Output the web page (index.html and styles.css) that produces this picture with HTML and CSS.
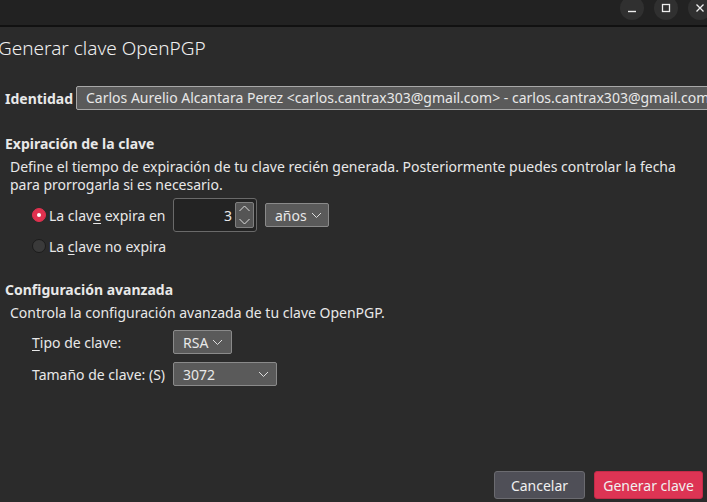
FILE: index.html
```html
<!DOCTYPE html>
<html lang="es">
<head>
<meta charset="utf-8">
<title>Generar clave OpenPGP</title>
<link rel="stylesheet" href="styles.css">
</head>
<body>
<div class="titlebar">
  <div class="wbtn"><svg width="16" height="16" viewBox="0 0 16 16"><path d="M4 11.5h8" stroke="#eee" stroke-width="1.4"/></svg></div>
  <div class="wbtn"><svg width="16" height="16" viewBox="0 0 16 16"><rect x="4.5" y="4.5" width="7" height="7" fill="none" stroke="#eee" stroke-width="1.3"/></svg></div>
  <div class="wbtn"><svg width="16" height="16" viewBox="0 0 16 16"><path d="M4.5 4.5l7 7M11.5 4.5l-7 7" stroke="#eee" stroke-width="1.3"/></svg></div>
</div>
<div class="dialog">
  <h1 class="title">Generar clave OpenPGP</h1>
  <div class="identity">
    <span class="bold id-label">Identidad</span>
    <div class="idfield">Carlos Aurelio Alcantara Perez &lt;carlos.cantrax303@gmail.com&gt; - carlos.cantrax303@gmail.com</div>
  </div>
  <h2 class="section">Expiración de la clave</h2>
  <p class="desc desc1">Define el tiempo de expiración de tu clave recién generada. Posteriormente puedes controlar la fecha para prorrogarla si es necesario.</p>
  <div class="row row-expire">
    <span class="radio checked"></span>
    <span class="lbl lbl-radio">La clav<u>e</u> expira en</span>
    <div class="spin">
      <span class="spinval">3</span>
      <div class="spinbtns">
        <svg width="17" height="12" viewBox="0 0 17 12"><path d="M3.5 8l5-5 5 5" fill="none" stroke="#ddd" stroke-width="1"/></svg>
        <svg width="17" height="12" viewBox="0 0 17 12"><path d="M3.5 4l5 5 5-5" fill="none" stroke="#ddd" stroke-width="1"/></svg>
      </div>
    </div>
    <div class="select sel-anos">años <svg class="chev" width="11" height="7" viewBox="0 0 11 7"><path d="M1 1l4.5 4.5L10 1" fill="none" stroke="#ddd" stroke-width="1"/></svg></div>
  </div>
  <div class="row row-noexp">
    <span class="radio"></span>
    <span class="lbl">La <u>c</u>lave no expira</span>
  </div>
  <h2 class="section sec2">Configuración avanzada</h2>
  <p class="desc">Controla la configuración avanzada de tu clave OpenPGP.</p>
  <div class="row row-tipo">
    <span class="lbl lbl-field"><u>T</u>ipo de clave:</span>
    <div class="select sel-rsa">RSA <svg class="chev" width="11" height="7" viewBox="0 0 11 7"><path d="M1 1l4.5 4.5L10 1" fill="none" stroke="#ddd" stroke-width="1"/></svg></div>
  </div>
  <div class="row row-size">
    <span class="lbl lbl-field">Tamaño de clave: (S)</span>
    <div class="select sel-size"><span>3072</span><svg class="chev" width="11" height="7" viewBox="0 0 11 7"><path d="M1 1l4.5 4.5L10 1" fill="none" stroke="#ddd" stroke-width="1"/></svg></div>
  </div>
  <div class="spacer"></div>
  <div class="buttons">
    <button class="btn btn-cancel">Cancelar</button>
    <button class="btn btn-primary">Generar clave</button>
  </div>
</div>
</body>
</html>
```
FILE: styles.css
```css
html, body {
  margin: 0;
  padding: 0;
  height: 100%;
  overflow: hidden;
}
body {
  background: #2b2b2b;
  color: #e8e8e8;
  font-family: "Noto Sans", "Open Sans", sans-serif;
  font-size: 14px;
  display: flex;
  flex-direction: column;
}
.titlebar {
  height: 25px;
  background: #222222;
  border-bottom: 2px solid #111111;
  display: flex;
  justify-content: flex-end;
  align-items: flex-start;
  gap: 10px;
  margin-right: -5px;
  flex: none;
}
.wbtn {
  width: 24px;
  height: 24px;
  border-radius: 50%;
  background: #303030;
  margin-top: -4px;
  display: flex;
  align-items: center;
  justify-content: center;
}
.wbtn svg { display: block; }
.dialog {
  flex: 1;
  display: flex;
  flex-direction: column;
  padding: 0 4px 3px 5px;
  min-height: 0;
}
.title {
  margin: 9px 0 0 -7px;
  font-size: 19px;
  font-weight: 300;
  line-height: 24px;
  color: #f0f0f0;
}
.identity {
  display: flex;
  align-items: center;
  margin-top: 26px;
  height: 24px;
  white-space: nowrap;
}
.bold { font-weight: 700; }
.id-label { width: 71px; flex: none; }
.idfield {
  flex: none;
  height: 22px;
  line-height: 22px;
  padding: 0 9px;
  background: #5a5a5a;
  border: 1px solid #a8a8a8;
  border-radius: 2px;
}
.section {
  margin: 25px 0 0 0;
  font-size: 14px;
  font-weight: 700;
  line-height: 18px;
}
.sec2 { margin-top: 24px; }
.desc {
  margin: 5px 0 0 5px;
  line-height: 18px;
}
.desc1 { margin-top: 5px; padding-right: 4px; }
.row {
  display: flex;
  align-items: center;
  margin-left: 27px;
  white-space: nowrap;
}
.row-expire { margin-top: 4px; height: 34px; }
.row-noexp { margin-top: 3px; height: 22px; }
.radio {
  width: 12px;
  height: 12px;
  border-radius: 50%;
  background: #3a3a3a;
  border: 1px solid #1c1c1c;
  margin-right: 3px;
  flex: none;
  position: relative;
}
.radio.checked {
  background: #e0314f;
  border-color: #e0314f;
}
.radio.checked::after {
  content: "";
  position: absolute;
  left: 4px;
  top: 4px;
  width: 4px;
  height: 4px;
  border-radius: 50%;
  background: #ffffff;
}
.lbl u { text-decoration-thickness: 1px; text-underline-offset: 2px; }
.lbl-radio { width: 124px; flex: none; }
.spin {
  width: 84px;
  height: 34px;
  border: 1px solid #6a6a6a;
  border-radius: 3px;
  background: #232323;
  display: flex;
  align-items: center;
  justify-content: flex-end;
  gap: 3px;
  padding-right: 2px;
  box-sizing: border-box;
  flex: none;
}
.spinbtns {
  display: flex;
  flex-direction: column;
  background: #555555;
  border: 1px solid #808080;
  border-radius: 2px;
}
.spinbtns svg { display: block; }
.select {
  display: flex;
  align-items: center;
  gap: 4px;
  height: 24px;
  padding: 0 6px 0 9px;
  background: #5a5a5a;
  border: 1px solid #8a8a8a;
  border-radius: 2px;
  box-sizing: border-box;
  flex: none;
}
.sel-anos { margin-left: 8px; width: 64px; }
.sel-rsa { width: 59px; }
.chev { display: block; }
.lbl-field { width: 141px; flex: none; }
.row-tipo { margin-top: 8px; height: 24px; }
.row-size { margin-top: 8px; height: 24px; }
.sel-size {
  width: 104px;
  justify-content: space-between;
  padding-right: 7px;
}
.spacer { flex: 1; }
.buttons {
  display: flex;
  justify-content: flex-end;
  gap: 9px;
}
.btn {
  font-family: inherit;
  font-size: 14px;
  color: #f0f0f0;
  height: 28px;
  border-radius: 3px;
  padding: 0;
  white-space: nowrap;
}
.btn-cancel {
  background: #4f4f57;
  border: 1px solid #6b6b70;
  width: 91px;
}
.btn-primary {
  background: #dd3454;
  border: 1px solid #c42a48;
  width: 109px;
}
```
